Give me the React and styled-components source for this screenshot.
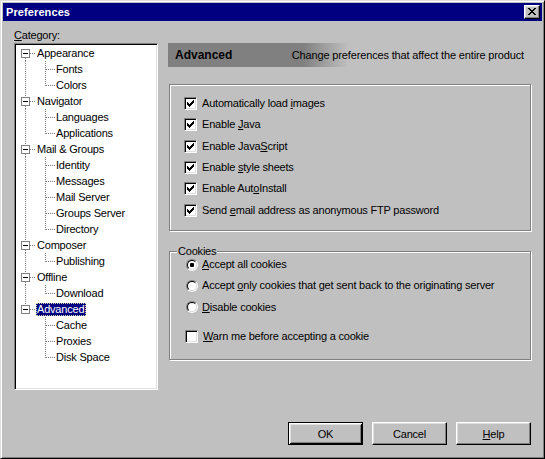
import React from 'react';
import styled, { createGlobalStyle, css } from 'styled-components';

const GlobalStyle = createGlobalStyle`
  html, body { margin: 0; padding: 0; background: #c0c0c0; }
  body {
    font-family: "Liberation Sans", Arial, sans-serif;
    font-size: 11px;
    letter-spacing: -0.2px;
    color: #000;
  }
`;

const Window = styled.div`
  box-sizing: border-box;
  width: 545px;
  height: 459px;
  background: #c0c0c0;
  border: 1px solid;
  border-color: #dfdfdf #000 #000 #dfdfdf;
  box-shadow: inset 1px 1px #fff, inset -1px -1px #808080;
  padding: 2px;
  display: flex;
  flex-direction: column;
`;

const TitleBar = styled.div`
  height: 18px;
  flex: none;
  background: #000080;
  color: #fff;
  display: flex;
  align-items: center;
  justify-content: space-between;
  padding: 0 2px 0 2px;
`;

const Title = styled.span`
  font-weight: bold;
  font-size: 11px;
  letter-spacing: 0.1px;
  padding-left: 1px;
`;

const CloseButton = styled.div`
  box-sizing: border-box;
  width: 16px;
  height: 14px;
  background: #c0c0c0;
  border: 1px solid;
  border-color: #fff #000 #000 #fff;
  box-shadow: inset -1px -1px #808080, inset 1px 1px #dfdfdf;
  display: flex;
  align-items: center;
  justify-content: center;
  svg { display: block; margin: -1px 0 0 -1px; }
`;

const Body = styled.div`
  flex: 1;
  display: flex;
  flex-direction: column;
  padding: 0 10px 0 11px;
`;

const Columns = styled.div`
  display: flex;
  gap: 10px;
`;

const LeftColumn = styled.div`
  width: 144px;
  flex: none;
  display: flex;
  flex-direction: column;
`;

const CategoryLabel = styled.div`
  margin-top: 8px;
  height: 13px;
  line-height: 13px;
`;

const TreeBox = styled.div`
  box-sizing: border-box;
  margin-top: 1px;
  height: 347px;
  background: #fff;
  border: 1px solid;
  border-color: #808080 #fff #fff #808080;
  box-shadow: inset 1px 1px #000, inset -1px -1px #dfdfdf;
  padding: 1px;
  overflow: hidden;
`;

const TreeRow = styled.div`
  display: flex;
  align-items: center;
  height: 16px;
  svg { display: block; flex: none; }
`;

const TreeLabel = styled.span`
  box-sizing: border-box;
  height: 13px;
  line-height: 11px;
  border: 1px solid transparent;
  padding: 0 1px 0 0;
  white-space: nowrap;
  ${(p) =>
    p.$selected &&
    css`
      background: #000080;
      color: #fff;
      border: 1px dotted #d8d8a8;
    `}
`;

const RightColumn = styled.div`
  width: 364px;
  flex: none;
  display: flex;
  flex-direction: column;
  padding-top: 22px;
`;

const Header = styled.div`
  height: 24px;
  display: flex;
  align-items: center;
  justify-content: space-between;
  padding: 0 8px 0 7px;
  background: linear-gradient(to right, #808080 0, #808080 135px, #a0a0a0 158px, #c0c0c0 181px);
`;

const HeaderTitle = styled.span`
  font-weight: bold;
  font-size: 12px;
  letter-spacing: 0;
`;

const HeaderText = styled.span`
  letter-spacing: -0.15px;
`;

const Group = styled.div`
  position: relative;
  box-sizing: border-box;
  width: 362px;
  height: ${(p) => p.$height}px;
  margin: ${(p) => p.$top}px 0 0 1px;
  border: 1px solid #808080;
  box-shadow: inset 1px 1px #fff, 1px 1px #fff;
  padding: ${(p) => p.$padTop}px 0 0 ${(p) => p.$padLeft}px;
`;

const Legend = styled.span`
  position: absolute;
  top: -7px;
  left: 7px;
  line-height: 13px;
  padding: 0 1px;
  background: #c0c0c0;
`;

const OptionRow = styled.div`
  display: flex;
  align-items: center;
  height: 21.33px;
  gap: ${(p) => p.$gap || 5}px;
  line-height: 13px;
  white-space: nowrap;
  margin-top: ${(p) => (p.$spaced ? 8 : 0)}px;
`;

const CheckBox = styled.span`
  box-sizing: border-box;
  width: 13px;
  height: 13px;
  flex: none;
  background: #fff;
  border: 1px solid;
  border-color: #808080 #fff #fff #808080;
  box-shadow: inset 1px 1px #000, inset -1px -1px #dfdfdf;
  padding: 2px 0 0 2px;
  svg { display: block; }
`;

const Radio = styled.span`
  box-sizing: border-box;
  width: 12px;
  height: 12px;
  flex: none;
  margin-left: 1px;
  border-radius: 50%;
  border: 1px solid;
  border-color: #808080 #fff #fff #808080;
  display: flex;
  align-items: center;
  justify-content: center;
`;

const RadioInner = styled.span`
  box-sizing: border-box;
  width: 10px;
  height: 10px;
  border-radius: 50%;
  background: #fff;
  border: 1px solid;
  border-color: #000 #dfdfdf #dfdfdf #000;
  display: flex;
  align-items: center;
  justify-content: center;
`;

const RadioDot = styled.span`
  width: 4px;
  height: 4px;
  border-radius: 1px;
  background: #000;
`;

const Key = styled.span`
  text-decoration: underline;
  text-underline-offset: 1px;
`;

const ButtonRow = styled.div`
  display: flex;
  justify-content: flex-end;
  gap: 9px;
  margin: 32px 1px 0 0;
`;

const Button = styled.div`
  box-sizing: border-box;
  width: 75px;
  height: 23px;
  display: flex;
  align-items: center;
  justify-content: center;
  background: #c0c0c0;
  border: 1px solid;
  border-color: #fff #000 #000 #fff;
  box-shadow: inset -1px -1px #808080, inset 1px 1px #dfdfdf;
  ${(p) =>
    p.$default &&
    css`
      border-color: #000;
      box-shadow: inset 1px 1px #fff, inset -1px -1px #000, inset 2px 2px #dfdfdf,
        inset -2px -2px #808080;
    `}
`;

const CloseGlyph = () => (
  <svg width="8" height="7" viewBox="0 0 8 7" shapeRendering="crispEdges">
    <path
      fill="#000"
      d="M0 0h2v1H0zM6 0h2v1H6zM1 1h2v1H1zM5 1h2v1H5zM2 2h4v1H2zM3 3h2v1H3zM2 4h4v1H2zM1 5h2v1H1zM5 5h2v1H5zM0 6h2v1H0zM6 6h2v1H6z"
    />
  </svg>
);

const CheckGlyph = () => (
  <svg width="7" height="7" viewBox="0 0 7 7" shapeRendering="crispEdges">
    <path
      fill="#000"
      d="M0 2h1v3H0zM1 3h1v3H1zM2 4h1v3H2zM3 3h1v3H3zM4 2h1v3H4zM5 1h1v3H5zM6 0h1v3H6z"
    />
  </svg>
);

const dot = { stroke: '#808080', strokeWidth: 1, strokeDasharray: '1 1' };

const RootConnector = ({ first, last }) => (
  <svg width="20" height="16" shapeRendering="crispEdges">
    {!first && <line x1="9.5" y1="0" x2="9.5" y2="4" {...dot} />}
    {!last && <line x1="9.5" y1="13" x2="9.5" y2="16" {...dot} />}
    <line x1="14" y1="8.5" x2="20" y2="8.5" {...dot} />
    <rect x="5.5" y="4.5" width="8" height="8" fill="#fff" stroke="#808080" />
    <line x1="7" y1="8.5" x2="12" y2="8.5" stroke="#000" />
  </svg>
);

const ChildConnector = ({ parentLast, last }) => (
  <svg width="39" height="16" shapeRendering="crispEdges">
    {!parentLast && <line x1="9.5" y1="0" x2="9.5" y2="16" {...dot} />}
    <line x1="29.5" y1="0" x2="29.5" y2={last ? 9 : 16} {...dot} />
    <line x1="30" y1="8.5" x2="39" y2="8.5" {...dot} />
  </svg>
);

const tree = [
  { label: 'Appearance', children: ['Fonts', 'Colors'] },
  { label: 'Navigator', children: ['Languages', 'Applications'] },
  { label: 'Mail & Groups', children: ['Identity', 'Messages', 'Mail Server', 'Groups Server', 'Directory'] },
  { label: 'Composer', children: ['Publishing'] },
  { label: 'Offline', children: ['Download'] },
  { label: 'Advanced', children: ['Cache', 'Proxies', 'Disk Space'] },
];

const Tree = () => (
  <TreeBox>
    {tree.map((node, i) => {
      const lastRoot = i === tree.length - 1;
      return (
        <React.Fragment key={node.label}>
          <TreeRow>
            <RootConnector first={i === 0} last={lastRoot} />
            <TreeLabel $selected={node.label === 'Advanced'}>{node.label}</TreeLabel>
          </TreeRow>
          {node.children.map((c, j) => (
            <TreeRow key={c}>
              <ChildConnector parentLast={lastRoot} last={j === node.children.length - 1} />
              <TreeLabel>{c}</TreeLabel>
            </TreeRow>
          ))}
        </React.Fragment>
      );
    })}
  </TreeBox>
);

const Check = ({ checked, children }) => (
  <OptionRow>
    <CheckBox>{checked && <CheckGlyph />}</CheckBox>
    <span>{children}</span>
  </OptionRow>
);

const RadioOption = ({ selected, children }) => (
  <OptionRow $gap={4}>
    <Radio>
      <RadioInner>{selected && <RadioDot />}</RadioInner>
    </Radio>
    <span>{children}</span>
  </OptionRow>
);

export default function App() {
  return (
    <>
      <GlobalStyle />
      <Window>
        <TitleBar>
          <Title>Preferences</Title>
          <CloseButton>
            <CloseGlyph />
          </CloseButton>
        </TitleBar>
        <Body>
          <Columns>
            <LeftColumn>
              <CategoryLabel>
                <Key>C</Key>ategory:
              </CategoryLabel>
              <Tree />
            </LeftColumn>
            <RightColumn>
              <Header>
                <HeaderTitle>Advanced</HeaderTitle>
                <HeaderText>Change preferences that affect the entire product</HeaderText>
              </Header>
              <Group $top={17} $height={147} $padTop={8} $padLeft={14}>
                <Check checked>
                  Automatically load <Key>i</Key>mages
                </Check>
                <Check checked>
                  Enable <Key>J</Key>ava
                </Check>
                <Check checked>
                  Enable Java<Key>S</Key>cript
                </Check>
                <Check checked>
                  Enable <Key>s</Key>tyle sheets
                </Check>
                <Check checked>
                  Enable Aut<Key>o</Key>Install
                </Check>
                <Check checked>
                  Send <Key>e</Key>mail address as anonymous FTP password
                </Check>
              </Group>
              <Group $top={20} $height={109} $padTop={2} $padLeft={15}>
                <Legend>Cookies</Legend>
                <RadioOption selected>
                  <Key>A</Key>ccept all cookies
                </RadioOption>
                <RadioOption>
                  Accept <Key>o</Key>nly cookies that get sent back to the originating server
                </RadioOption>
                <RadioOption>
                  <Key>D</Key>isable cookies
                </RadioOption>
                <OptionRow $spaced>
                  <CheckBox />
                  <span>
                    <Key>W</Key>arn me before accepting a cookie
                  </span>
                </OptionRow>
              </Group>
            </RightColumn>
          </Columns>
          <ButtonRow>
            <Button $default>OK</Button>
            <Button>Cancel</Button>
            <Button>
              <span>
                <Key>H</Key>elp
              </span>
            </Button>
          </ButtonRow>
        </Body>
      </Window>
    </>
  );
}
